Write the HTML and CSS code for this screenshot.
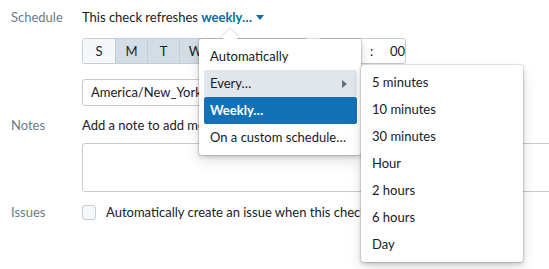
FILE: index.html
```html
<!DOCTYPE html>
<html lang="en">
<head>
  <meta charset="UTF-8" />
  <title>Check schedule</title>
  <link rel="stylesheet" href="styles.css">
</head>
<body>
  <div class="form">
    <div class="row">
      <div class="label">Schedule</div>
      <div class="field">
        <div class="line">This check refreshes <span class="trigger">weekly… <span class="caret"></span></span></div>
        <div class="time-row">
          <div class="days">
            <span class="day">S</span>
            <span class="day on">M</span>
            <span class="day on">T</span>
            <span class="day on">W</span>
            <span class="day on">T</span>
            <span class="day on">F</span>
            <span class="day">S</span>
          </div>
          <div class="time">
            <span class="hh">09</span>
            <span class="colon">:</span>
            <span class="mm">00</span>
          </div>
        </div>
        <div class="tz">America/New_York</div>
      </div>
    </div>

    <div class="row">
      <div class="label">Notes</div>
      <div class="field">
        <div class="line">Add a note to add more context about this check</div>
        <div class="notes"></div>
      </div>
    </div>

    <div class="row">
      <div class="label">Issues</div>
      <div class="field">
        <div class="line check-line"><span class="checkbox"></span>Automatically create an issue when this check fails</div>
      </div>
    </div>
  </div>

  <div class="menu main-menu">
    <div class="menu-caret"></div>
    <div class="item">Automatically</div>
    <div class="item hover">Every…<span class="sub-arrow"></span></div>
    <div class="item active">Weekly…</div>
    <div class="item">On a custom schedule…</div>
  </div>

  <div class="menu sub-menu">
    <div class="item">5 minutes</div>
    <div class="item">10 minutes</div>
    <div class="item">30 minutes</div>
    <div class="item">Hour</div>
    <div class="item">2 hours</div>
    <div class="item">6 hours</div>
    <div class="item">Day</div>
  </div>
</body>
</html>
```

FILE: styles.css
```css
body {
  font-family: 'Lato', 'Liberation Sans', sans-serif;
  font-size: 13px;
  color: #182026;
  background: white;
  margin: 0;
  overflow: hidden;
}

.form {
  padding: 7px 0 0 11px;
}

.row {
  display: flex;
}

.label {
  width: 71px;
  flex-shrink: 0;
  line-height: 20px;
  color: #6b7d8b;
}

.field {
  flex: 1;
}

.line {
  line-height: 20px;
  white-space: nowrap;
}

.trigger {
  color: #106ba3;
  font-weight: bold;
}

.caret {
  display: inline-block;
  width: 0;
  height: 0;
  border-left: 4px solid transparent;
  border-right: 4px solid transparent;
  border-top: 5px solid #106ba3;
  vertical-align: 2px;
  margin-left: 1px;
}

.time-row {
  display: flex;
  gap: 10px;
  margin-top: 11px;
}

.days {
  display: flex;
  height: 26px;
  border: 1px solid #c5cdd3;
  border-radius: 3px;
  box-sizing: border-box;
  overflow: hidden;
}

.day {
  width: 32px;
  box-sizing: border-box;
  line-height: 24px;
  text-align: center;
  background: #f5f8fa;
  border-left: 1px solid #c5cdd3;
}

.day:first-child {
  border-left: none;
}

.day.on {
  background: #d3dde5;
}

.time {
  display: flex;
  align-items: center;
  width: 88px;
  height: 26px;
  border: 1px solid #c5cdd3;
  border-radius: 3px;
  box-sizing: border-box;
  padding-left: 10px;
}

.hh {
  width: 41px;
}

.colon {
  width: 20px;
}

.tz {
  width: 200px;
  height: 27px;
  line-height: 25px;
  border: 1px solid #c5cdd3;
  border-radius: 3px;
  box-sizing: border-box;
  padding-left: 8px;
  margin-top: 15px;
  margin-bottom: 9px;
}

.notes {
  width: 600px;
  height: 49px;
  border: 1px solid #c5cdd3;
  border-radius: 3px;
  box-sizing: border-box;
  margin-top: 8px;
  margin-bottom: 10px;
}

.check-line {
  display: flex;
  align-items: center;
}

.checkbox {
  width: 14px;
  height: 15px;
  border: 1px solid #c5cdd3;
  border-radius: 3px;
  background: #f5f8fa;
  box-sizing: border-box;
  margin-right: 10px;
}

.menu {
  position: absolute;
  width: 162px;
  box-sizing: border-box;
  padding: 4px 4px 4px 5px;
  background: white;
  border-radius: 3px;
  box-shadow: 0 0 0 1px rgba(16, 22, 26, 0.1), 0 2px 4px rgba(16, 22, 26, 0.2), 0 6px 14px rgba(16, 22, 26, 0.12);
}

.main-menu {
  left: 199px;
  top: 39px;
}

.sub-menu {
  left: 361px;
  top: 65px;
}

.menu-caret {
  position: absolute;
  left: 25px;
  top: -8px;
  width: 12px;
  height: 12px;
  background: white;
  transform: rotate(45deg);
  box-shadow: -1px -1px 1px rgba(16, 22, 26, 0.12);
}

.item {
  position: relative;
  height: 27px;
  line-height: 27px;
  padding: 0 6px;
  border-radius: 2px;
  white-space: nowrap;
}

.item.hover {
  background: #e1e6ea;
}

.item.active {
  background: #1371b6;
  color: white;
  font-weight: bold;
}

.sub-arrow {
  position: absolute;
  right: 10px;
  top: 10px;
  width: 0;
  height: 0;
  border-top: 4px solid transparent;
  border-bottom: 4px solid transparent;
  border-left: 5px solid #5c7080;
}
```
